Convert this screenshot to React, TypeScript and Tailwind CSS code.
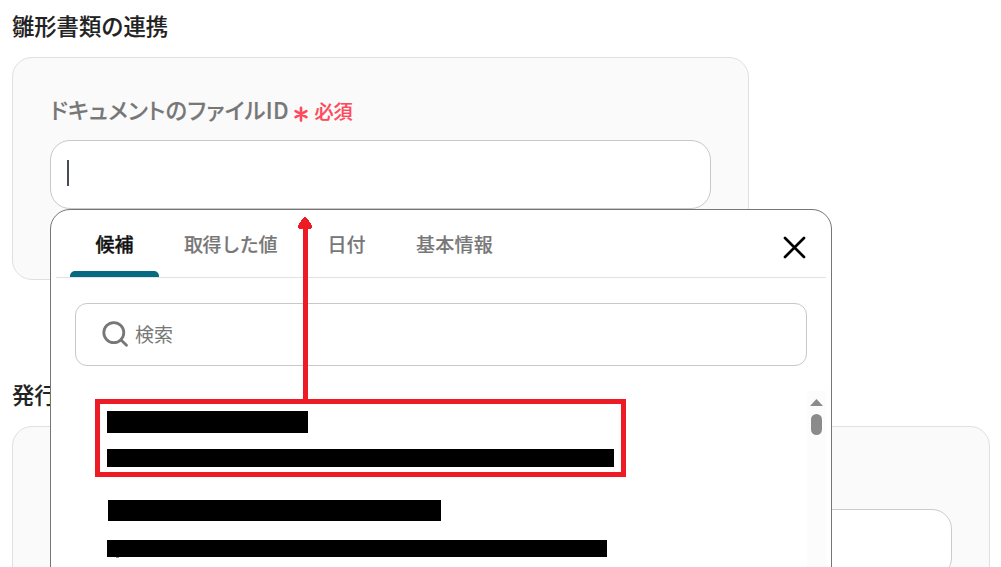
import { useState } from "react";

const TABS = [
  { id: "candidates", label: "候補", cls: "ml-[14px] w-[89px]" },
  { id: "values", label: "取得した値", cls: "w-[143px] tracking-[-0.4px]" },
  { id: "date", label: "日付", cls: "w-[89px]" },
  { id: "basic", label: "基本情報", cls: "w-[127px] tracking-[0.3px]" },
];

export default function App() {
  return (
    <div className="h-[567px] w-[1001px] overflow-hidden bg-white pl-3 font-['Noto_Sans_CJK_JP',sans-serif]">
      <SectionTitle>雛形書類の連携</SectionTitle>
      <section className="h-[223px] w-[737px] rounded-[20px] border border-[#e0e0e2] bg-[#fafafa] px-[37px] pt-[38px]">
        <label className="flex h-[44px] items-start whitespace-nowrap">
          <span className="-mt-[2px] text-[22.3px] leading-[30px] font-medium tracking-[0.3px] text-[#777] [-webkit-text-stroke:0.15px] [font-feature-settings:'palt']">
            ドキュメントのファイルID
          </span>
          <RequiredMark />
          <span className="-mt-px ml-[6px] text-[19.2px] leading-[32px] font-medium text-[#ff4a5c] [-webkit-text-stroke:0.2px]">必須</span>
        </label>
        <div className="relative h-[69px] w-[661px] rounded-[20px] border border-[#c8c8c8] bg-white pt-[19px] pl-4">
          <div className="h-[26px] w-[2px] bg-[#484c55]" />
          <SuggestPanel />
        </div>
      </section>

      <div className="mt-[89px]">
        <SectionTitle>発行書類の設定</SectionTitle>
        <section className="h-[223px] w-[978px] rounded-[20px] border border-[#e0e0e2] bg-[#fafafa] px-[37px] pt-[82px]">
          <div className="h-[69px] rounded-[20px] border border-[#c8ccd0] bg-white" />
        </section>
      </div>
    </div>
  );
}

function SectionTitle({ children }: { children: string }) {
  return <h2 className="h-[57px] pt-[9px] text-[22.3px] leading-[32px] font-medium text-[#222] [-webkit-text-stroke:0.15px]">{children}</h2>;
}

function RequiredMark() {
  return (
    <svg className="mt-[10px] ml-[5.5px] h-4 w-[14px]" viewBox="0 0 14 16" stroke="#ff4a5c" strokeWidth="2.6" strokeLinecap="round">
      <path d="M7 1.8v12.8M1.6 5.2l10.8 6M12.4 5.2L1.6 11.2" />
    </svg>
  );
}

function SuggestPanel() {
  const [active, setActive] = useState("candidates");

  return (
    <div className="absolute top-[68px] -left-px z-10 h-[400px] w-[782px] rounded-t-[20px] border border-[#757575] bg-white px-[5px]">
      <div className="flex h-[68px] border-b border-[#e2e2e2]">
        {TABS.map((t) => (
          <button
            key={t.id}
            onClick={() => setActive(t.id)}
            className={`relative h-[67px] pt-[2px] text-[19px] font-medium whitespace-nowrap ${t.cls} ${active === t.id ? "text-[#111] [-webkit-text-stroke:0.35px]" : "text-[#777] [-webkit-text-stroke:0.15px]"}`}
          >
            {t.label}
            {active === t.id && <span className="absolute bottom-0 left-0 h-[6px] w-full rounded-t-[5px] bg-[#066a82]" />}
          </button>
        ))}
        <button aria-label="閉じる" className="mt-[25px] mr-[20px] ml-auto size-6">
          <svg viewBox="0 0 24 24" className="size-6" stroke="#000" strokeWidth="2.7" strokeLinecap="round">
            <path d="M3 3l19 19M22 3l-19 19" />
          </svg>
        </button>
      </div>

      <div className="mx-[19px] mt-[25px] flex h-[63px] items-center rounded-xl border border-[#c8c8c8] pl-[26px]">
        <svg viewBox="0 0 28 28" className="size-7 shrink-0" fill="none" stroke="#777" strokeWidth="2.8" strokeLinecap="round">
          <circle cx="11.8" cy="11.6" r="10" />
          <path d="M19.3 19.3l5.2 5" />
        </svg>
        <input
          placeholder="検索"
          className="-mt-[3px] ml-[5px] h-10 w-[600px] text-[19px] text-[#222] outline-none placeholder:text-[#777]"
        />
      </div>

      {/* candidate list, names masked */}
      <div className="mt-[25px] flex h-[218px] justify-between">
        <div className="ml-[39px] pt-2">
          <div className="relative h-[78px] w-[531px] border-5 border-[#ed1c24] pt-[7px] pl-[7px]">
            <div className="h-[22px] w-[201px] bg-black" />
            <div className="mt-4 h-[18px] w-[507px] bg-black" />
            <PointerArrow />
          </div>
          <div className="pl-3">
            <div className="mt-[23px] ml-px h-[21px] w-[333px] bg-black" />
            <div className="mt-[19px] h-[17px] w-[500px] bg-black" />
            <div className="ml-[9px] h-px w-[3px] bg-[#8b9298]" />
          </div>
        </div>
        <div className="flex w-[19px] flex-col items-center bg-[#fcfcfc] pt-2">
          <svg viewBox="0 0 13 7" className="h-[7px] w-[13px]" fill="#8b8b8b">
            <path d="M6.5 0L13 7H0z" />
          </svg>
          <div className="mt-2 h-[21px] w-[11px] rounded-full bg-[#8b8b8b]" />
        </div>
      </div>
    </div>
  );
}

function PointerArrow() {
  return (
    <svg className="absolute -top-[187px] left-[198px] h-[183px] w-[14px]" viewBox="0 0 14 183" fill="#ed1c24" shapeRendering="crispEdges">
      <path d="M7 0L9 1L13 7L14 9V11L12.5 12H10V183H5V12H1.5L0 11V9L1 7L5 1Z" />
    </svg>
  );
}
